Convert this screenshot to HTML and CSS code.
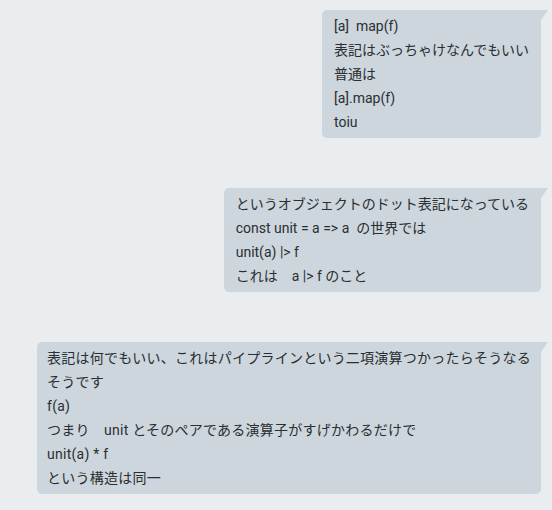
FILE: index.html
```html
<!DOCTYPE html>
<html lang="ja">
<head>
<meta charset="utf-8">
<link rel="stylesheet" href="styles.css">
</head>
<body>
<div class="chat">
  <div class="msg"><div class="bubble">[a]  map(f)
表記はぶっちゃけなんでもいい
普通は
[a].map(f)
toiu</div></div>
  <div class="msg"><div class="bubble">というオブジェクトのドット表記になっている
const unit = a =&gt; a  の世界では
unit(a) |&gt; f
これは　a |&gt; f のこと</div></div>
  <div class="msg"><div class="bubble wide">表記は何でもいい、これはパイプラインという二項演算つかったらそうなる
そうです
f(a)
つまり　unit とそのペアである演算子がすげかわるだけで
unit(a) * f
という構造は同一</div></div>
</div>
</body>
</html>
```
FILE: styles.css
```css
html, body {
  margin: 0;
  padding: 0;
  background: #e9edf0;
}
body {
  font-family: Roboto, "Noto Sans CJK JP", sans-serif;
  font-size: 14px;
  color: #2a2e31;
}
.chat {
  display: flex;
  flex-direction: column;
  gap: 50px;
  padding: 10px 10px 10px 10px;
}
.msg {
  display: flex;
  justify-content: flex-end;
}
.bubble {
  position: relative;
  background: #cdd6dd;
  border-radius: 5px 0 5px 5px;
  padding: 4px 12px 4px 12px;
  line-height: 24px;
  white-space: pre;
  margin-right: 1px;
}
.bubble.wide {
  padding-left: 10px;
  padding-right: 10px;
  letter-spacing: 0.24px;
}
.bubble::after {
  content: "";
  position: absolute;
  top: 0;
  right: -7px;
  width: 0;
  height: 0;
  border-top: 10px solid #cdd6dd;
  border-right: 7px solid transparent;
}
```
